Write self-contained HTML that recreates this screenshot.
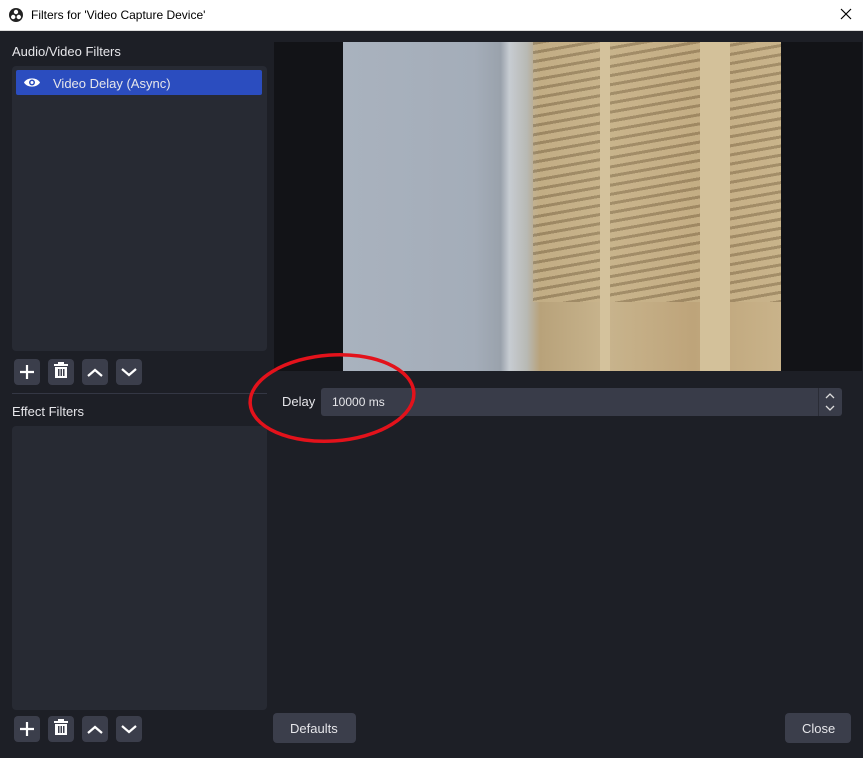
<!DOCTYPE html><html><head><style>
body{margin:0;width:863px;height:758px;background:#1d1f26;font-family:"Liberation Sans",sans-serif;position:relative;overflow:hidden;color:#e6e6ea}
.a{position:absolute}
.btn{position:absolute;width:26px;height:26px;background:#3b3e4b;border-radius:4px}
.t{font-size:13px}
</style></head><body>
<div class="a" style="left:0;top:0;width:863px;height:30px;background:#fff;border-bottom:1px solid #ddd"></div>
<svg class="a" style="left:9px;top:8px" width="14" height="14" viewBox="0 0 14 14"><circle cx="7" cy="7" r="7" fill="#222"/><circle cx="7" cy="4" r="2.2" fill="#fff"/><circle cx="4.2" cy="9" r="2.2" fill="#fff"/><circle cx="9.8" cy="9" r="2.2" fill="#fff"/></svg>
<div class="a t" style="left:31px;top:8px;color:#000;font-size:12px">Filters for 'Video Capture Device'</div>
<svg class="a" style="left:840px;top:8px" width="12" height="12"><path d="M1 1L11 11M11 1L1 11" stroke="#000" stroke-width="1.2"/></svg>
<div class="a t" style="left:12px;top:44px">Audio/Video Filters</div>
<div class="a" style="left:12px;top:66px;width:255px;height:285px;background:#272a33;border-radius:4px"></div>
<div class="a" style="left:16px;top:70px;width:246px;height:25px;background:#2b4dbf;border-radius:2px"></div>
<svg class="a" style="left:24px;top:76px" width="16" height="13" viewBox="0 0 16 13"><path d="M0 6.5C3 1 13 1 16 6.5 13 12 3 12 0 6.5Z" fill="#fff"/><circle cx="8" cy="6.5" r="3" fill="#2b4dbf"/><circle cx="8" cy="6.5" r="1.5" fill="#fff"/></svg>
<div class="a t" style="left:53px;top:76px">Video Delay (Async)</div>
<div class="btn" style="left:14px;top:359px"></div><div class="btn" style="left:48px;top:359px"></div><div class="btn" style="left:82px;top:359px"></div><div class="btn" style="left:116px;top:359px"></div>
<div class="btn" style="left:14px;top:716px"></div><div class="btn" style="left:48px;top:716px"></div><div class="btn" style="left:82px;top:716px"></div><div class="btn" style="left:116px;top:716px"></div>
<svg class="a" style="left:0;top:0" width="150" height="758">
<g stroke="#fff" stroke-width="2.2" fill="none">
<path d="M20 372h14M27 365v14"/><path d="M88 376l7-6 7 6"/><path d="M122 369l7 6 7-6"/>
<path d="M20 729h14M27 722v14"/><path d="M88 733l7-6 7 6"/><path d="M122 726l7 6 7-6"/>
</g>
<g fill="#fff"><rect x="54" y="364" width="14" height="2"/><rect x="58" y="362" width="6" height="2"/><path d="M55 367h12v11h-12z"/></g>
<g fill="#3b3e4b"><rect x="58" y="369" width="1.5" height="7"/><rect x="60.5" y="369" width="1.5" height="7"/><rect x="63" y="369" width="1.5" height="7"/></g>
<g fill="#fff"><rect x="54" y="721" width="14" height="2"/><rect x="58" y="719" width="6" height="2"/><path d="M55 724h12v11h-12z"/></g>
<g fill="#3b3e4b"><rect x="58" y="726" width="1.5" height="7"/><rect x="60.5" y="726" width="1.5" height="7"/><rect x="63" y="726" width="1.5" height="7"/></g>
</svg>
<div class="a" style="left:12px;top:393px;width:255px;height:1px;background:#343744"></div>
<div class="a t" style="left:12px;top:404px">Effect Filters</div>
<div class="a" style="left:12px;top:426px;width:255px;height:284px;background:#272a33;border-radius:4px"></div>
<div class="a" style="left:274px;top:42px;width:588px;height:329px;background:#121317"></div>
<div class="a" style="left:343px;top:42px;width:438px;height:329px;background:linear-gradient(90deg,#a9b2be 0%,#a4adb9 30%,#9aa2ac 36%,#c7ccd2 38%,#b8b9b4 42%,#b8a27a 45%,#c8b48d 60%,#bea47a 80%,#c9b38a 100%)"></div>
<div class="a" style="left:533px;top:42px;width:248px;height:260px;background:repeating-linear-gradient(170deg,#8a7552 0 3px,#c9b48b 3px 9px);opacity:.6"></div>
<div class="a" style="left:600px;top:42px;width:10px;height:329px;background:#d4c29c"></div>
<div class="a" style="left:700px;top:42px;width:30px;height:329px;background:#d3c19a"></div>
<div class="a t" style="left:282px;top:394px">Delay</div>
<div class="a" style="left:321px;top:388px;width:521px;height:28px;background:#393c49;border-radius:3px"></div>
<div class="a" style="left:818px;top:388px;width:1px;height:28px;background:#2a2c36"></div>
<svg class="a" style="left:822px;top:390px" width="16" height="24"><path d="M4 8l4-4 4 4M4 16l4 4 4-4" stroke="#ddd" stroke-width="1.3" fill="none"/></svg>
<div class="a t" style="left:332px;top:395px;font-size:12px">10000 ms</div>
<svg class="a" style="left:245px;top:350px" width="175" height="100"><ellipse cx="87" cy="48" rx="82" ry="43" stroke="#e3121b" stroke-width="3.5" fill="none" transform="rotate(-4 87 48)"/></svg>
<div class="a" style="left:273px;top:713px;width:83px;height:30px;background:#3b3e4b;border-radius:4px"></div>
<div class="a t" style="left:290px;top:721px">Defaults</div>
<div class="a" style="left:785px;top:713px;width:66px;height:30px;background:#3b3e4b;border-radius:4px"></div>
<div class="a t" style="left:802px;top:721px">Close</div>
</body></html>
